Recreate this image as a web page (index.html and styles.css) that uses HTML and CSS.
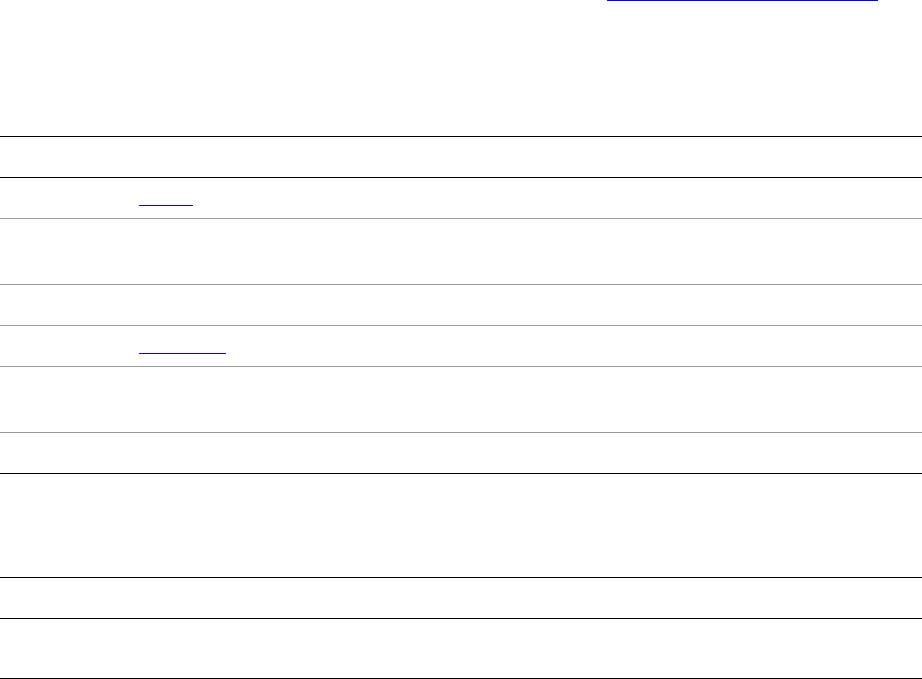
FILE: index.html
```html
<!DOCTYPE html>
<html lang="en">
<head>
<meta charset="utf-8">
<title>Table</title>
<link rel="stylesheet" href="styles.css">
</head>
<body>
<div class="top">
  <a class="top-link" href="#" aria-label="link"></a>
</div>
<div class="table">
  <div class="row h40 dark"></div>
  <div class="row h40 light"><a class="cell-link w54" href="#" aria-label="link"></a></div>
  <div class="row h65 light"></div>
  <div class="row h40 light"></div>
  <div class="row h40 light"><a class="cell-link w87" href="#" aria-label="link"></a></div>
  <div class="row h65 light"></div>
  <div class="row h40 dark"></div>
  <div class="row h103 dark"></div>
  <div class="row h40 dark"></div>
  <div class="row h59 dark"></div>
</div>
</body>
</html>
```

FILE: styles.css
```css
html, body {
  margin: 0;
  padding: 0;
  background: #ffffff;
  font-family: "Liberation Sans", Arial, sans-serif;
}

.top {
  height: 136px;
  display: flex;
  align-items: flex-start;
}

.top-link {
  display: block;
  margin-left: 607px;
  width: 271px;
  height: 0;
  border-bottom: 1px solid #0000ff;
}

.table {
  border-top: 1px solid #000000;
  width: 922px;
}

.row {
  box-sizing: content-box;
  display: flex;
  align-items: flex-start;
}

.dark { border-bottom: 1px solid #000000; }
.light { border-bottom: 1px solid #9a9a9a; }

.h40 { height: 40px; }
.h59 { height: 59px; }
.h65 { height: 65px; }
.h103 { height: 103px; }

.cell-link {
  display: block;
  margin-left: 139px;
  margin-top: 27px;
  height: 0;
  border-bottom: 1px solid #0000ff;
}

.w54 { width: 54px; }
.w87 { width: 87px; }
```
